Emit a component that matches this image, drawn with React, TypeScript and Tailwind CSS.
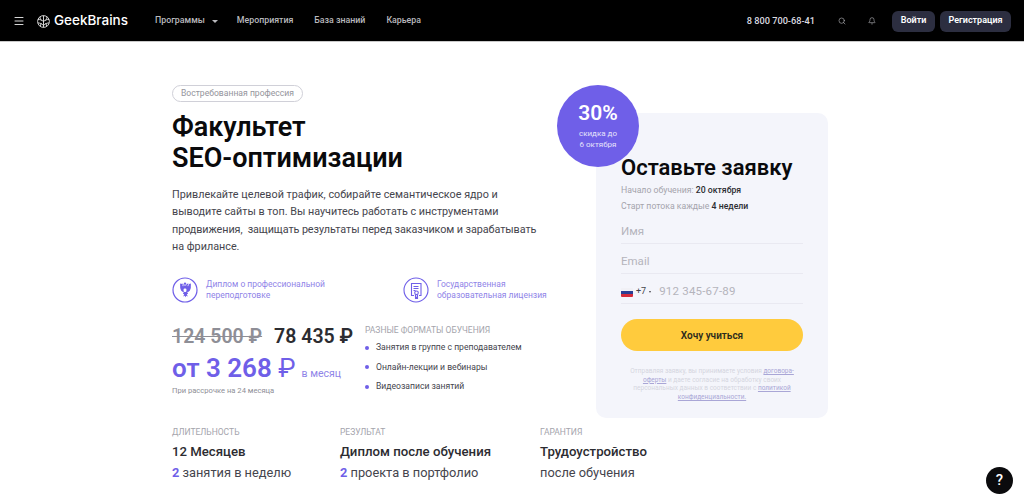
import { Search, Bell, Menu } from "lucide-react";

const F = { fontFamily: '"Roboto", "Noto Sans", sans-serif' };

function Logo() {
  return (
    <svg width="13" height="13" viewBox="0 0 13 13" fill="none" stroke="#e8e8e8" strokeWidth=".9">
      <circle cx="6.5" cy="6.5" r="5.9" />
      <path d="M6.500.7v11.600M1 4.500c2 0 3.500.3 5.500 2M12 4.500c-2 0-3.500.3-5.500 2M1 8c2 0 3.500.5 5.500 2.500M12 8c-2 0-3.500.5-5.500 2.500M3 1.800c0 2 .8 3 1.500 3.500M10 1.800c0 2-.8 3-1.500 3.500M3.500 11c0-1.500.5-2.500 1-3M9.500 11c0-1.500-.5-2.500-1-3" />
    </svg>
  );
}

function Eagle() {
  return (
    <svg width="26" height="26" viewBox="0 0 26 26" fill="none" className="shrink-0">
      <circle cx="13" cy="13" r="12" stroke="#6f5fe8" strokeWidth="1.2" />
      <path
        fill="#6f5fe8"
        d="M9.500 6.500l1.800.6.600 1.400.8.600-.4-1.800-.7-.8 1.400-1.200 1.400 1.200-.7.8-.4 1.800.8-.6.600-1.400 1.800-.6-.4 1.500-.8.900.8.300 1-2.200 1.800-.4-.1 4.500-.9 2.300-1.300 1.400-1.400.3.900 1.600-1.300.5 1 2.200-1.500-.6-.8 1.400-.8-1.400-1.500.6 1-2.200-1.300-.5.900-1.600-1.400-.3-1.300-1.400-.9-2.300-.1-4.500 1.800.4 1 2.200.8-.3-.8-.9z"
      />
      <rect x="11.600" y="11.500" width="2.800" height="3.400" rx="1" fill="#fff" />
    </svg>
  );
}

function Licence() {
  return (
    <svg width="26" height="26" viewBox="0 0 26 26" fill="none" stroke="#6f5fe8" strokeWidth="1.1" className="shrink-0">
      <circle cx="13" cy="13" r="12" />
      <path d="M16 18.500h2V6.500H8.500v12H11" />
      <path d="M10.500 9.500h5M10.500 11.500h5M10.500 13.500h2" />
      <circle cx="13.500" cy="15.800" r="1.800" />
      <path d="M12.500 17.500V21l1-.8 1 .8v-3.500" />
    </svg>
  );
}

function Flag() {
  return (
    <span className="flex h-[9px] w-[12px] flex-col overflow-hidden rounded-[1px]">
      <span className="h-[3px] bg-[#f1f1f6]" />
      <span className="h-[3px] bg-[#2b3f94]" />
      <span className="h-[3px] bg-[#d52b3a]" />
    </span>
  );
}

function Bullet({ children }: { children: string }) {
  return (
    <li className="flex h-[19.500px] items-center gap-[7px] text-[8.600px] text-[#45454d]">
      <span className="h-[4px] w-[4px] rounded-full bg-[#6f5fe8]" />
      {children}
    </li>
  );
}

function Fact({ label, title, sub, num, w }: { label: string; title: string; sub: string; num?: string; w: string }) {
  return (
    <div className={w}>
      <div className="text-[8.500px] leading-[12px] text-[#a4a4ac]">{label}</div>
      <div className="mt-[5px] text-[13.200px] font-medium leading-[18px] text-[#2c2c31]">{title}</div>
      <div className="mt-[3px] text-[12.800px] leading-[18px] text-[#45454d]">
        {num && <span className="font-bold text-[#6f5fe8]">{num} </span>}
        {sub}
      </div>
    </div>
  );
}

export default function App() {
  return (
    <div style={F} className="relative h-[503px] w-[1024px] overflow-hidden bg-white">
      <header className="flex h-[42px] items-center border-b border-[#c9c9c9] bg-black pt-[1px] pr-[13px] pl-[13px] text-white">
        <Menu size={12} strokeWidth={2} color="#d5d5d5" />
        <div className="ml-[12px] flex items-center gap-[4px]">
          <Logo />
          <span className="font-['Inter'] text-[13.500px] font-medium leading-none">GeekBrains</span>
        </div>
        <nav className="ml-[27px] flex items-center text-[8.800px] font-medium text-[#b9b9bd]">
          <span>Программы</span>
          <span className="ml-[7px] h-0 w-0 border-x-[3px] border-t-[3.500px] border-x-transparent border-t-[#b9b9bd]" />
          <span className="ml-[19px]">Мероприятия</span>
          <span className="ml-[21px]">База знаний</span>
          <span className="ml-[21px]">Карьера</span>
        </nav>
        <span className="ml-auto text-[9.200px] font-medium text-[#dcdce0]">8 800 700-68-41</span>
        <Search size={8} strokeWidth={1.800} color="#b9b9bd" className="ml-[23px]" />
        <Bell size={8} strokeWidth={1.800} color="#b9b9bd" className="ml-[22px]" />
        <button className="ml-[16px] flex h-[21px] w-[43px] items-center justify-center rounded-[6px] bg-[#2c2e40] text-[9px] font-semibold">Войти</button>
        <button className="ml-[5px] flex h-[21px] w-[71px] items-center justify-center rounded-[6px] bg-[#2c2e40] text-[9px] font-semibold">Регистрация</button>
      </header>

      <main className="flex items-start pl-[172px]">
        <div className="w-[424px] shrink-0 pt-[43px]">
          <span className="flex h-[17px] w-[131px] items-center justify-center rounded-full border border-[#d0d0d8] text-[8.600px] text-[#94949c]">Востребованная профессия</span>
          <h1 className="mt-[10px] text-[27px] font-semibold leading-[31px] text-[#0a0a0c]">Факультет<br />SEO-оптимизации</h1>
          <p className="mt-[12px] text-[10.800px] leading-[17.300px] text-[#45454d]">
            Привлекайте целевой трафик, собирайте семантическое ядро и<br />
            выводите сайты в топ. Вы научитесь работать с инструментами<br />
            <span className="tracking-[-0.08px]">продвижения,&nbsp; защищать результаты перед заказчиком и зарабатывать</span><br />
            на фрилансе.
          </p>
          <div className="mt-[22px] flex text-[8.500px] leading-[11px] text-[#8f84e8]">
            <div className="flex w-[231px] shrink-0 items-center gap-[8px]"><Eagle /><span>Диплом о профессиональной<br />переподготовке</span></div>
            <div className="flex items-center gap-[8px]"><Licence /><span>Государственная<br />образовательная лицензия</span></div>
          </div>
          <div className="mt-[21px] flex">
            <div className="w-[193px] shrink-0">
              <div className="flex items-baseline gap-[12px] text-[19.500px] font-semibold leading-[26px]">
                <span className="text-[#8e8e96] line-through">124 500 ₽</span>
                <span className="text-[#2c2c31]">78 435 ₽</span>
              </div>
              <div className="mt-[2px] flex items-baseline text-[#6f5fe8]">
                <span className="text-[26px] font-semibold leading-[33px]">от 3 268 <span className="font-normal">₽</span></span>
                <span className="ml-[6px] text-[10.500px] text-[#8f84e8]">в месяц</span>
              </div>
              <div className="text-[7.600px] text-[#8e8e96]">При рассрочке на 24 месяца</div>
            </div>
            <div>
              <div className="text-[8.500px] leading-[12px] text-[#a4a4ac]">РАЗНЫЕ ФОРМАТЫ ОБУЧЕНИЯ</div>
              <ul className="mt-[2px]">
                <Bullet>Занятия в группе с преподавателем</Bullet>
                <Bullet>Онлайн-лекции и вебинары</Bullet>
                <Bullet>Видеозаписи занятий</Bullet>
              </ul>
            </div>
          </div>
          <div className="mt-[29px] flex">
            <Fact w="w-[168px] shrink-0" label="ДЛИТЕЛЬНОСТЬ" title="12 Месяцев" num="2" sub="занятия в неделю" />
            <Fact w="w-[200px] shrink-0" label="РЕЗУЛЬТАТ" title="Диплом после обучения" num="2" sub="проекта в портфолио" />
            <Fact w="w-[120px] shrink-0" label="ГАРАНТИЯ" title="Трудоустройство" sub="после обучения" />
          </div>
        </div>

        <aside className="relative mt-[71px] h-[305px] w-[232px] rounded-[10px] bg-[#f4f5fb] px-[25px] pt-[42px]">
          <div className="absolute -top-[28px] -left-[39px] flex h-[82px] w-[82px] flex-col items-center rounded-full bg-[#6f5fe8] pt-[16px] text-white">
            <span className="text-[21px] font-semibold leading-[24px]">30%</span>
            <span className="mt-[4px] text-center text-[8px] leading-[10.500px] text-[#e6e3fb]">скидка до<br />6 октября</span>
          </div>
          <h2 className="text-[22px] font-semibold leading-[26px] text-[#0a0a0c]">Оставьте заявку</h2>
          <div className="pt-[2px] text-[8.700px] leading-[15px] text-[#a4a4ac]">
            <div>Начало обучения: <span className="font-medium text-[#2c2c31]">20 октября</span></div>
            <div className="mt-[1px]">Старт потока каждые <span className="font-medium text-[#2c2c31]">4 недели</span></div>
          </div>
          <div className="flex h-[30px] items-end border-b border-[#e9e9f1] pb-[3px] text-[11.500px] text-[#b4b4bc]">Имя</div>
          <div className="flex h-[30px] items-end border-b border-[#e9e9f1] pb-[3px] text-[11.500px] text-[#b4b4bc]">Email</div>
          <div className="flex h-[30px] items-end border-b border-[#e9e9f1] pb-[4px] text-[#45454d]">
            <span className="flex h-[14px] items-center">
              <Flag />
              <span className="ml-[3px] text-[9px]">+7</span>
              <span className="ml-[3px] h-0 w-0 border-x-[1.500px] border-t-[2px] border-x-transparent border-t-[#45454d]" />
              <span className="ml-[8px] text-[11.500px] tracking-[.2px] text-[#b4b4bc]">912 345-67-89</span>
            </span>
          </div>
          <button className="mt-[15px] flex h-[32px] w-[182px] items-center justify-center rounded-full bg-[#ffcb3d] text-[10px] font-semibold text-[#2c2a1c]">Хочу учиться</button>
          <p className="mt-[16px] text-center text-[6.500px] leading-[8.700px] text-[#d5d5e0]">
            Отправляя заявку, вы принимаете условия <span className="text-[#a9a6d6] underline">договора-</span><br />
            <span className="text-[#a9a6d6] underline">оферты</span> и даете согласие на обработку своих<br />
            персональных данных в соответствии с <span className="text-[#a9a6d6] underline">политикой</span><br />
            <span className="text-[#a9a6d6] underline">конфиденциальности.</span>
          </p>
        </aside>
      </main>

      <button className="absolute right-[11px] bottom-[9px] flex h-[27px] w-[27px] items-center justify-center rounded-full bg-[#0b0b0d] text-[15px] font-medium text-white">?</button>
    </div>
  );
}
